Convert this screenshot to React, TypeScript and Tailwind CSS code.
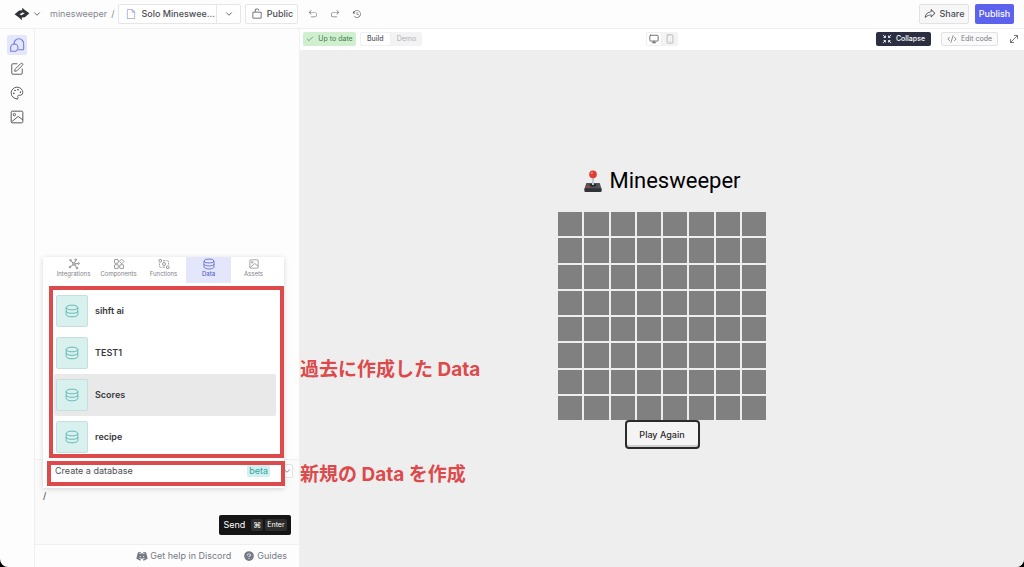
import { useState } from 'react';
import type { ReactNode } from 'react';
import { ChevronDown, Check, Monitor, Palette, Smartphone, CodeXml, MoveDiagonal, SquarePen } from 'lucide-react';
import {
    PiArrowUUpLeft,
    PiArrowUUpRight,
    PiClockCounterClockwise,
    PiDiscordLogoFill,
    PiFile,
    PiLockSimpleOpen,
    PiQuestionFill,
    PiShareFat,
} from 'react-icons/pi';

const DATABASES = ['sihft ai', 'TEST1', 'Scores', 'recipe'];

const CELLS = Array.from({ length: 64 }, (_, i) => i);

function LogoIcon() {
    return (
        <svg viewBox="0 0 16 14" className="h-3.5 w-4" fill="none">
            <path d="M.6 7.2 5.2 3.4l3-.2V.8l2.6 2.3 4.6 3.1-4.6 4-3 .3v2.7L5 10.6Z" fill="#2f2f36" />
            <path d="m5.4 7.6 3-2 2.4.4-3 2.2Z" fill="#f4f4f4" />
        </svg>
    );
}

function ChatsIcon() {
    return (
        <svg viewBox="0 0 24 24" className="size-4" fill="none" stroke="currentColor" strokeWidth="1.6" strokeLinejoin="round">
            <path d="M7.5 11.5V10a7.2 7.2 0 0 1 14.5 0v8a1 1 0 0 1-1 1h-7" />
            <path d="M2.5 20.5V16a5.5 5.5 0 1 1 5.5 5.5H3.5a1 1 0 0 1-1-1Z" />
        </svg>
    );
}

function PictureIcon({ className }: { className: string }) {
    return (
        <svg viewBox="0 0 24 24" className={className} fill="none" stroke="currentColor" strokeWidth="1.7" strokeLinejoin="round">
            <rect x="2" y="2" width="20" height="20" rx="2" />
            <circle cx="7.5" cy="8" r="2" />
            <path d="m3 20 11-9 8 6" />
        </svg>
    );
}

function DataIcon({ className }: { className: string }) {
    return (
        <svg viewBox="0 0 24 24" className={className} fill="none" stroke="currentColor" strokeWidth="1.6">
            <ellipse cx="12" cy="6" rx="10" ry="4" />
            <path d="M2 6v12c0 2.2 4.5 4 10 4s10-1.800 10-4V6" />
            <path d="M2 12c0 2.200 4.500 4 10 4s10-1.800 10-4" />
        </svg>
    );
}

function IntegrationsIcon() {
    return (
        <svg viewBox="0 0 24 24" className="size-3" fill="none" stroke="currentColor" strokeWidth="1.9">
            <circle cx="12" cy="12" r="2.6" />
            <circle cx="5" cy="4.500" r="1.600" />
            <circle cx="15.500" cy="3.500" r="1.600" />
            <circle cx="21" cy="11" r="1.600" />
            <circle cx="4" cy="18" r="1.600" />
            <circle cx="18" cy="20" r="1.600" />
            <path d="m6 5.600 4 4.400M14.900 5.100l-1.700 4.300M19.400 11.200l-4.800.5M5.300 17l4.600-3.400M17 18.700l-3.400-4.600" />
        </svg>
    );
}

function ComponentsIcon() {
    return (
        <svg viewBox="0 0 24 24" className="size-3" fill="none" stroke="currentColor" strokeWidth="1.6">
            <rect x="3" y="3" width="7.5" height="7.5" rx="1" />
            <rect x="3" y="13.5" width="7.5" height="7.5" rx="1" />
            <rect x="13.5" y="13.5" width="7.5" height="7.5" rx="1" />
            <path d="m17.300 2.200 4.600 4.600-4.600 4.600-4.600-4.600Z" />
        </svg>
    );
}

function FunctionsIcon() {
    return (
        <svg viewBox="0 0 24 24" className="size-3" fill="none" stroke="currentColor" strokeWidth="1.6">
            <rect x="2" y="3" width="5" height="5" rx="1" />
            <rect x="17" y="16" width="5" height="5" rx="1" />
            <circle cx="12" cy="12" r="3" />
            <path d="M10 5.500h9a2 2 0 0 1 2 2V13M14 18.500H5a2 2 0 0 1-2-2V11" strokeDasharray="5 2" />
        </svg>
    );
}

const TABS: { name: string; icon: ReactNode }[] = [
    { name: 'Integrations', icon: <IntegrationsIcon /> },
    { name: 'Components', icon: <ComponentsIcon /> },
    { name: 'Functions', icon: <FunctionsIcon /> },
    { name: 'Data', icon: <DataIcon className="size-3" /> },
    { name: 'Assets', icon: <PictureIcon className="size-3 p-px" /> },
];

function Header() {
    return (
        <header className="flex h-[29px] shrink-0 items-center border-b border-[#f0f0f1] bg-[#fdfdfd] px-2.5 text-[#4b4d55]">
            <button aria-label="Main menu" className="ml-1 flex items-center gap-0.5">
                <LogoIcon />
                <ChevronDown className="size-2.5" />
            </button>
            <a href="#" className="ml-2 text-[9px] text-[#85878f]">minesweeper</a>
            <span className="ml-1 text-[9px] text-[#85878f]">/</span>
            <div className="ml-1 flex h-5 w-[123px] rounded-xs border border-[#e6e6e8] bg-white">
                <button className="flex flex-1 items-center gap-1 pl-1.5 text-[9px] font-medium whitespace-nowrap">
                    <PiFile className="size-3 text-[#9aa1dc]" />
                    Solo Mineswee...
                </button>
                <button aria-label="Switch page" className="flex w-6 items-center justify-center border-l border-[#e6e6e8]">
                    <ChevronDown className="size-2.5" />
                </button>
            </div>
            <button className="ml-1 flex h-5 w-[53px] items-center justify-center gap-1 rounded-xs border border-[#e6e6e8] bg-white text-[9px] font-medium">
                <PiLockSimpleOpen className="size-3" />
                Public
            </button>
            <div className="ml-2 flex items-center gap-3 pl-0.5">
                <button aria-label="Undo"><PiArrowUUpLeft className="size-2.5 text-[#77797f]" /></button>
                <button aria-label="Redo"><PiArrowUUpRight className="size-2.5 text-[#77797f]" /></button>
                <button aria-label="History"><PiClockCounterClockwise className="size-2.5" /></button>
            </div>
            <button className="ml-auto flex h-5 w-[50px] items-center justify-center gap-1 rounded-xs border border-[#e2e2e4] bg-[#f7f7f8] text-[9px] font-medium">
                <PiShareFat className="size-3" />
                Share
            </button>
            <button className="ml-1.5 h-5 w-[39px] rounded-xs bg-[#5c61ee] text-[9px] font-medium text-white">Publish</button>
        </header>
    );
}

function SideNav() {
    return (
        <nav className="flex w-[35px] shrink-0 flex-col items-center gap-1 border-r border-[#f0f0f1] pt-1.5 text-[#55575d]">
            <button aria-label="Chat" className="flex size-5 items-center justify-center rounded-xs bg-[#e4e7fb] text-[#757bd6]"><ChatsIcon /></button>
            <button aria-label="Edit" className="flex size-5 items-center justify-center"><SquarePen className="size-3.5" strokeWidth={1.6} /></button>
            <button aria-label="Theme" className="flex size-5 items-center justify-center"><Palette className="size-3.5" strokeWidth={1.6} /></button>
            <button aria-label="Images" className="flex size-5 items-center justify-center"><PictureIcon className="size-3.5" /></button>
        </nav>
    );
}

function DataMenu() {
    const [tab, setTab] = useState('Data');

    return (
        <div className="absolute bottom-14 left-2 z-10 w-[241px] bg-white shadow-[0_1px_5px_rgba(0,0,0,0.16)]">
            <div className="grid grid-cols-5 px-2">
                {TABS.map(({ name, icon }) => (
                    <button
                        key={name}
                        onClick={() => setTab(name)}
                        className={`flex h-[26px] flex-col items-center justify-center pb-1 text-[6px] leading-2 ${
                            tab === name ? 'bg-[#e4e7fb] font-medium text-[#5b61c9]' : 'text-[#808289]'
                        }`}
                    >
                        {icon}
                        {name}
                    </button>
                ))}
            </div>
            <div className="relative pt-[7px] pr-2 pl-[11px]">
                {DATABASES.map(name => (
                    <button
                        key={name}
                        className={`flex h-[42px] w-full items-center gap-[7px] rounded-xs pl-0.5 text-[9px] font-semibold text-[#3a3a3d] ${
                            name === 'Scores' ? 'bg-[#e9e9e9]' : ''
                        }`}
                    >
                        <span className="flex size-8 items-center justify-center rounded-xs border border-[#c5dfdd] bg-[#d9f1ee] text-[#5bb5b3]">
                            <DataIcon className="size-3.5" />
                        </span>
                        {name}
                    </button>
                ))}
                <div className="pointer-events-none absolute top-[3px] right-0 bottom-0 left-1.5 border-4 border-[#dc4a4c]" />
            </div>
            <div className="relative flex h-[30px] items-center justify-between pr-3.5 pb-1 pl-3 text-[9px] text-[#4b4d55]">
                <button>Create a database</button>
                <span className="rounded-xs bg-[#d0f1ef] px-0.5 leading-3 text-[#3aa3a3]">beta</span>
                <div className="pointer-events-none absolute top-[3px] -right-px bottom-0.5 left-1 border-4 border-[#dc4a4c]" />
            </div>
        </div>
    );
}

function ChatPanel() {
    return (
        <section className="flex w-[265px] shrink-0 flex-col border-r border-[#f0f0f1] bg-[#fdfdfd]">
            <div className="flex-1" />
            <div className="relative flex h-[85px] flex-col border-t border-[#efeff0] bg-[#fafafa] px-1.5 pb-[9px]">
                <DataMenu />
                <button aria-label="More options" className="mt-1 ml-auto flex h-3.5 w-3 items-center justify-end rounded-xs border border-[#e2e2e4] bg-white text-[#77797f]">
                    <ChevronDown className="size-2.5" />
                </button>
                <textarea
                    aria-label="Message"
                    defaultValue="/"
                    className="mt-2.5 h-4 resize-none overflow-hidden bg-transparent px-0.5 text-[9px] leading-4 text-[#3a3a3d] outline-none"
                />
                <button className="mt-auto mr-0.5 flex h-5 w-[72px] items-center justify-center self-end rounded-xs bg-[#151515] text-[9px] text-white">
                    Send
                    <kbd className="ml-1.5 rounded-xs bg-[#2d2d2d] px-0.5 font-[Inter,'DejaVu_Sans',sans-serif] text-[8px] leading-3">⌘</kbd>
                    <kbd className="ml-0.5 rounded-xs bg-[#2d2d2d] px-0.5 font-[Inter,sans-serif] text-[7px] leading-3">Enter</kbd>
                </button>
            </div>
            <footer className="flex h-[23px] items-center justify-end gap-3 border-t border-[#efeff0] pr-3 text-[9px] text-[#777a87]">
                <a href="#" className="flex items-center gap-0.5"><PiDiscordLogoFill className="size-3" />Get help in Discord</a>
                <a href="#" className="flex items-center gap-0.5"><PiQuestionFill className="size-3" />Guides</a>
            </footer>
        </section>
    );
}

function Toolbar() {
    return (
        <div className="grid h-[21px] shrink-0 grid-cols-3 items-center bg-white pr-1 pb-px pl-[3px] text-[7px] text-[#55575d]">
            <div className="flex items-center gap-1">
                <span className="flex h-3.5 w-[53px] items-center justify-center gap-1 rounded-xs bg-[#cfefcf] text-[#3f7d4c]">
                    <Check className="size-2" />
                    Up to date
                </span>
                <div className="flex h-3.5 items-center rounded-xs bg-[#f3f3f4]">
                    <button className="h-3.5 rounded-xs border border-[#f0f0f1] bg-white px-1.5 font-medium">Build</button>
                    <button className="px-1.5 text-[#b0b1b5]">Demo</button>
                </div>
            </div>
            <div className="flex h-3.5 items-center justify-self-center rounded-xs bg-[#f3f3f4]">
                <button aria-label="Desktop" className="flex h-3.5 w-4 items-center justify-center rounded-xs border border-[#f0f0f1] bg-white"><Monitor className="size-2.5" /></button>
                <button aria-label="Mobile" className="flex w-4 justify-center text-[#b0b1b5]"><Smartphone className="size-2.5" /></button>
            </div>
            <div className="flex items-center justify-end gap-2.5">
                <button className="flex h-3.5 w-[55px] items-center justify-center gap-1 rounded-xs bg-[#2c2f42] font-medium whitespace-nowrap text-white">
                    <svg viewBox="0 0 16 16" className="size-2.5" fill="none" stroke="currentColor" strokeWidth="1.4">
                        <path d="m1.500 1.500 4 4M5.500 2.500v3h-3M14.500 1.500l-4 4M10.500 2.500v3h3M1.500 14.500l4-4M2.500 10.500h3v3M14.500 14.500l-4-4M13.500 10.500h-3v3" />
                    </svg>
                    Collapse
                </button>
                <button className="flex h-3.5 w-[57px] items-center justify-center gap-1 rounded-xs border border-[#e2e2e4] bg-[#fafafa] whitespace-nowrap text-[#77797f]">
                    <CodeXml className="size-2.5" />
                    Edit code
                </button>
                <button aria-label="Full screen"><MoveDiagonal className="size-3" strokeWidth={1.6} /></button>
            </div>
        </div>
    );
}

function Joystick() {
    return (
        <svg viewBox="0 0 20 24" className="h-[23px] w-5">
            <path d="M3 13.500h14l2 6.500H1Z" fill="#4d5358" />
            <rect x="1" y="19" width="18" height="4" rx="1" fill="#2e3338" />
            <ellipse cx="10" cy="15.600" rx="3.400" ry="1.600" fill="#22272b" />
            <path d="M8.900 6h2.200v9.600H8.900Z" fill="#c3c6ca" />
            <circle cx="10" cy="4.600" r="4" fill="#dd3f35" />
            <circle cx="8.800" cy="3.200" r="1.200" fill="#f58479" />
            <ellipse cx="4.800" cy="17.400" rx="1.600" ry="1" fill="#d0332e" />
        </svg>
    );
}

function Preview() {
    return (
        <main className="relative flex flex-1 flex-col items-center bg-[#eee] pt-[117px]">
            <h1 className="flex items-center gap-1.5 font-[Roboto,sans-serif] text-[22px] leading-7 text-black">
                <Joystick />
                Minesweeper
            </h1>
            <div className="mt-[17px] grid w-52 grid-cols-8 gap-0.5">
                {CELLS.map(i => (
                    <button key={i} aria-label={`Cell ${i + 1}`} className="aspect-square bg-[#808080]" />
                ))}
            </div>
            <button className="h-[29px] w-[75px] rounded-sm border-2 border-[#2b2b2b] bg-[#f4f4f4] text-[9px] font-medium text-[#2b2b2b] shadow-[inset_0_-2px_0_#cfcfcf]">
                Play Again
            </button>
            <p className="absolute top-[306px] left-0 text-[19px] leading-7 font-bold whitespace-nowrap text-[#dc4a4c]">過去に作成した Data</p>
            <p className="absolute top-[411px] left-0 text-[19px] leading-7 font-bold whitespace-nowrap text-[#dc4a4c]">新規の Data を作成</p>
        </main>
    );
}

export default function App() {
    return (
        <div className="flex min-h-screen flex-col bg-black font-[Inter,'Noto_Sans_CJK_JP',sans-serif]">
            <div className="flex flex-1 flex-col overflow-hidden rounded-b-lg bg-[#fdfdfd]">
                <Header />
                <div className="flex flex-1">
                    <SideNav />
                    <ChatPanel />
                    <div className="flex min-w-0 flex-1 flex-col">
                        <Toolbar />
                        <Preview />
                    </div>
                </div>
            </div>
        </div>
    );
}
